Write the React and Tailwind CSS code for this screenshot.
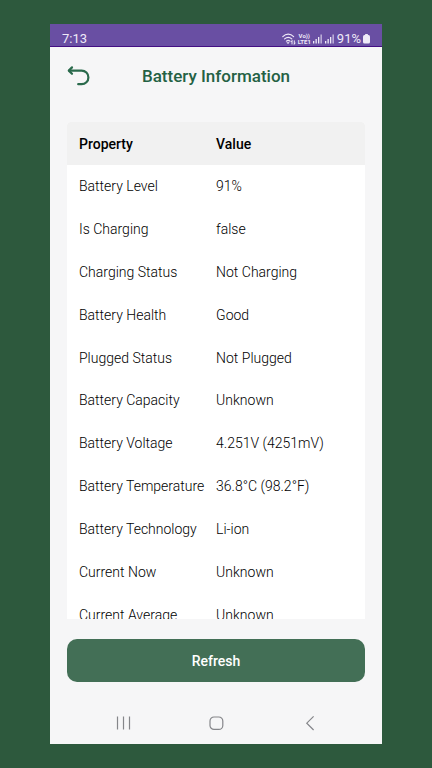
const rows = [
  ["Battery Level", "91%"],
  ["Is Charging", "false"],
  ["Charging Status", "Not Charging"],
  ["Battery Health", "Good"],
  ["Plugged Status", "Not Plugged"],
  ["Battery Capacity", "Unknown"],
  ["Battery Voltage", "4.251V (4251mV)"],
  ["Battery Temperature", "36.8°C (98.2°F)"],
  ["Battery Technology", "Li-ion"],
  ["Current Now", "Unknown"],
  ["Current Average", "Unknown"],
];

function WifiIcon() {
  return (
    <svg width="14" height="12" viewBox="0 0 14 12" fill="none" stroke="currentColor" strokeLinecap="round" aria-hidden="true">
      <path d="M0.8 3.6C4 0.3 8.4 0.3 11.6 3.6" strokeWidth="1.2" />
      <path d="M2.6 5.9C4.9 3.8 7.5 3.8 9.8 5.9" strokeWidth="1.2" />
      <path d="M4.4 8.1C5.6 7.1 6.8 7.1 8 8.1" strokeWidth="1.2" />
      <path d="M5.3 9.4H7.1L6.2 10.6Z" fill="currentColor" strokeWidth="0.6" />
      <path d="M10 11V7.8M9.1 8.8L10 7.8M12.3 7.8V11M13.2 10L12.3 11" strokeWidth="1" />
    </svg>
  );
}

function SignalIcon() {
  return (
    <svg width="10" height="10" viewBox="0 0 10 10" fill="currentColor" aria-hidden="true">
      <rect x="0" y="7" width="1.3" height="2.5" />
      <rect x="2.5" y="5" width="1.3" height="4.5" />
      <rect x="5" y="3" width="1.3" height="6.5" />
      <rect x="7.5" y="0.5" width="1.3" height="9" opacity="0.75" />
    </svg>
  );
}

function StatusBar() {
  return (
    <div className="flex h-[23px] shrink-0 items-end justify-between border-b border-[#430f83] bg-[#694fa3] px-3 text-[#efeaf8]">
      <span className="text-[13px] leading-[14px]">7:13</span>
      <div className="flex items-center gap-[2px]">
        <WifiIcon />
        <span className="flex flex-col text-center text-[6px] leading-[6px] font-bold">
          <span>Vo))</span>
          <span>LTE1</span>
        </span>
        <SignalIcon />
        <SignalIcon />
        <span className="flex items-center gap-[2px] text-[13px] leading-[14px]">
          91%
          <svg width="7" height="10" viewBox="0 0 7 10" fill="currentColor" aria-hidden="true">
            <rect x="2" y="0" width="3" height="2" rx="0.6" />
            <rect x="0" y="1.1" width="7" height="8.4" rx="1.5" />
          </svg>
        </span>
      </div>
    </div>
  );
}

function Header() {
  return (
    <header className="grid grid-cols-[24px_1fr_24px] items-center px-[17px] pt-[17px]">
      <button type="button" aria-label="Back" className="text-[#2a6a4c]">
        <svg width="24" height="24" viewBox="0 0 24 24" fill="none" stroke="currentColor" strokeWidth="2.2" strokeLinecap="round" strokeLinejoin="round" aria-hidden="true">
          <path d="M5 3.4L1.8 6.6L5 9.8" />
          <path d="M2.2 6.6H14.6A6.8 6.8 0 0 1 14.6 20.2H11.2" />
        </svg>
      </button>
      <h1 className="text-center text-[17px] leading-6 font-medium text-[#246144]">Battery Information</h1>
    </header>
  );
}

function NavBar() {
  return (
    <nav className="flex h-[42px] shrink-0 items-center justify-between px-[65px] text-[#85868a]">
      <button type="button" aria-label="Recent apps">
        <svg width="16" height="16" viewBox="0 0 16 16" stroke="currentColor" strokeWidth="1.2" aria-hidden="true">
          <path d="M2.5 1.5V14.5M8.5 1.5V14.5M14.5 1.5V14.5" />
        </svg>
      </button>
      <button type="button" aria-label="Home">
        <svg width="16" height="16" viewBox="0 0 16 16" fill="none" stroke="currentColor" strokeWidth="1.2" aria-hidden="true">
          <rect x="2" y="2" width="12.8" height="12.4" rx="4" />
        </svg>
      </button>
      <button type="button" aria-label="Back">
        <svg width="16" height="16" viewBox="0 0 16 16" fill="none" stroke="currentColor" strokeWidth="1.2" aria-hidden="true">
          <path d="M12.6 1.4L5.8 8.2L12.6 15" />
        </svg>
      </button>
    </nav>
  );
}

export default function App() {
  return (
    <div className="flex h-screen flex-col bg-[#2d593d] px-[50px] py-6 font-['Roboto',sans-serif]">
      <div className="flex min-h-0 flex-1 flex-col bg-[#f6f6f7]">
        <StatusBar />
        <Header />
        <main className="flex min-h-0 flex-1 flex-col gap-5 px-[17px] pt-[34px] pb-5">
          <div className="min-h-0 flex-1 overflow-hidden rounded-t bg-white">
            <table className="h-[514px] w-full table-fixed text-left text-[14px] leading-5 whitespace-nowrap text-black">
              <thead>
                <tr className="bg-[#f1f1f1]">
                  <th scope="col" className="h-[43px] w-[46%] pl-3 font-medium">Property</th>
                  <th scope="col" className="pl-3 font-medium">Value</th>
                </tr>
              </thead>
              <tbody className="font-light">
                {rows.map(([property, value]) => (
                  <tr key={property}>
                    <td className="pl-3">{property}</td>
                    <td className="pl-3">{value}</td>
                  </tr>
                ))}
              </tbody>
            </table>
          </div>
          <button type="button" className="h-[43px] shrink-0 rounded-[10px] bg-[#436f56] text-[14px] leading-5 font-medium text-white">
            Refresh
          </button>
        </main>
        <NavBar />
      </div>
    </div>
  );
}
